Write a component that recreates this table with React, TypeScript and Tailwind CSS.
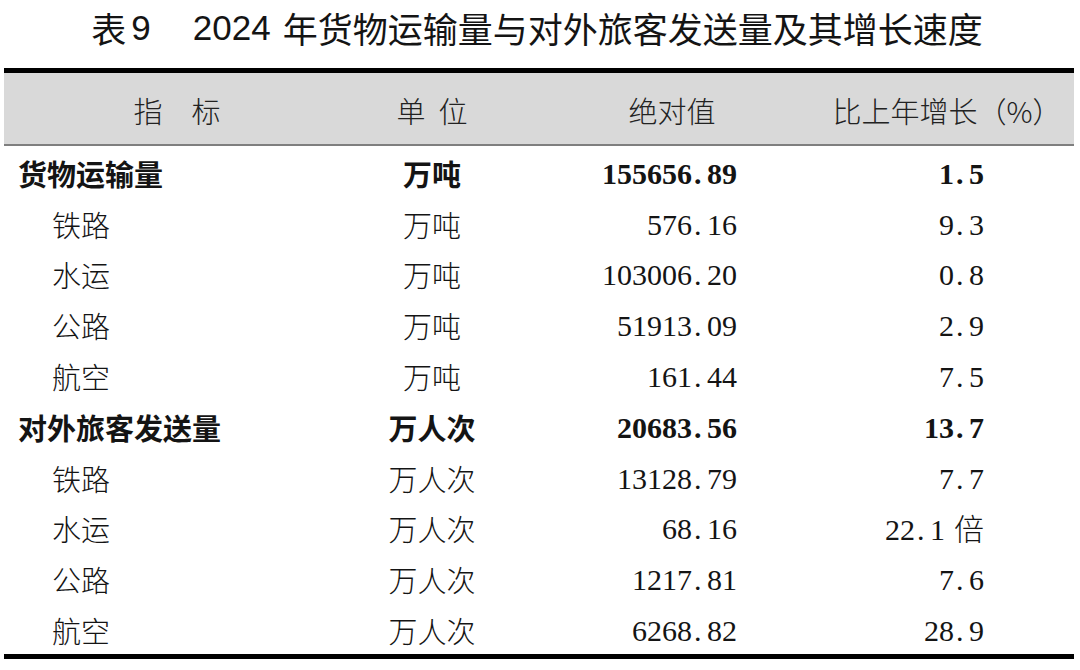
import React from 'react';

type Row = { name: string; unit: string; value: string; growth: string; bold?: boolean };

const rows: Row[] = [
  { name: '货物运输量', unit: '万吨', value: '155656.89', growth: '1.5', bold: true },
  { name: '铁路', unit: '万吨', value: '576.16', growth: '9.3' },
  { name: '水运', unit: '万吨', value: '103006.20', growth: '0.8' },
  { name: '公路', unit: '万吨', value: '51913.09', growth: '2.9' },
  { name: '航空', unit: '万吨', value: '161.44', growth: '7.5' },
  { name: '对外旅客发送量', unit: '万人次', value: '20683.56', growth: '13.7', bold: true },
  { name: '铁路', unit: '万人次', value: '13128.79', growth: '7.7' },
  { name: '水运', unit: '万人次', value: '68.16', growth: '22.1 倍' },
  { name: '公路', unit: '万人次', value: '1217.81', growth: '7.6' },
  { name: '航空', unit: '万人次', value: '6268.82', growth: '28.9' },
];

const cjk = "font-['Noto_Sans_CJK_SC',sans-serif]";
const serif = "font-['Liberation_Serif','Noto_Sans_CJK_SC',serif]";

// SimSun style numbers: the dot takes a full half-width cell
function Num({ text }: { text: string }) {
  const [num, suffix] = text.split(' ');
  const [int, frac] = num.split('.');
  return (
    <span className={serif}>
      {int}
      {frac !== undefined && (
        <>
          <span className="inline-block w-[15px] pl-[2px] text-left">.</span>
          {frac}
        </>
      )}
      {suffix && <span className={`${cjk} ml-[9px] font-light`}>{suffix}</span>}
    </span>
  );
}

export default function App() {
  return (
    <div className="w-[1080px] h-[670px] bg-white text-[#141414] overflow-hidden">
      <h1 className={`${cjk} h-[68px] flex items-center justify-center text-[35px] font-normal leading-none pb-[14px] pr-[6px]`}>
        <span>表</span>
        <span className="font-['Liberation_Sans',sans-serif] ml-[5px]">9</span>
        <span className="font-['Liberation_Sans',sans-serif] ml-[42px] mr-[12px]">2024</span>
        <span>年货物运输量与对外旅客发送量及其增长速度</span>
      </h1>

      <div className="ml-[4px] w-[1070px] border-t-[5px] border-b-[5px] border-black">
        <div className={`${cjk} flex h-[73px] items-center pt-[5px] bg-[#d9d9d9] border-b-[2px] border-[#7f7f7f] text-[29px] font-light text-[#222]`}>
          <div className="w-[346px] text-center">指　标</div>
          <div className="w-[164px] text-center">单&nbsp;&nbsp;位</div>
          <div className="w-[316px] text-center">绝对值</div>
          <div className="w-[234px] text-center whitespace-nowrap">比上年增长（%）</div>
        </div>

        {rows.map((r, i) => (
          <div
            key={i}
            className={`flex h-[50.8px] items-center pt-[4px] text-[29px] leading-none ${r.bold ? 'font-bold' : 'font-light'}`}
          >
            <div className={`${cjk} w-[346px] ${r.bold ? 'pl-[14px]' : 'pl-[48px]'}`}>{r.name}</div>
            <div className={`${cjk} w-[164px] text-center`}>{r.unit}</div>
            <div className={`w-[223px] text-right text-[30px] ${r.bold ? 'font-bold' : 'font-normal'}`}>
              <Num text={r.value} />
            </div>
            <div className={`w-[247px] text-right text-[30px] ${r.bold ? 'font-bold' : 'font-normal'}`}>
              <Num text={r.growth} />
            </div>
          </div>
        ))}
      </div>
    </div>
  );
}
